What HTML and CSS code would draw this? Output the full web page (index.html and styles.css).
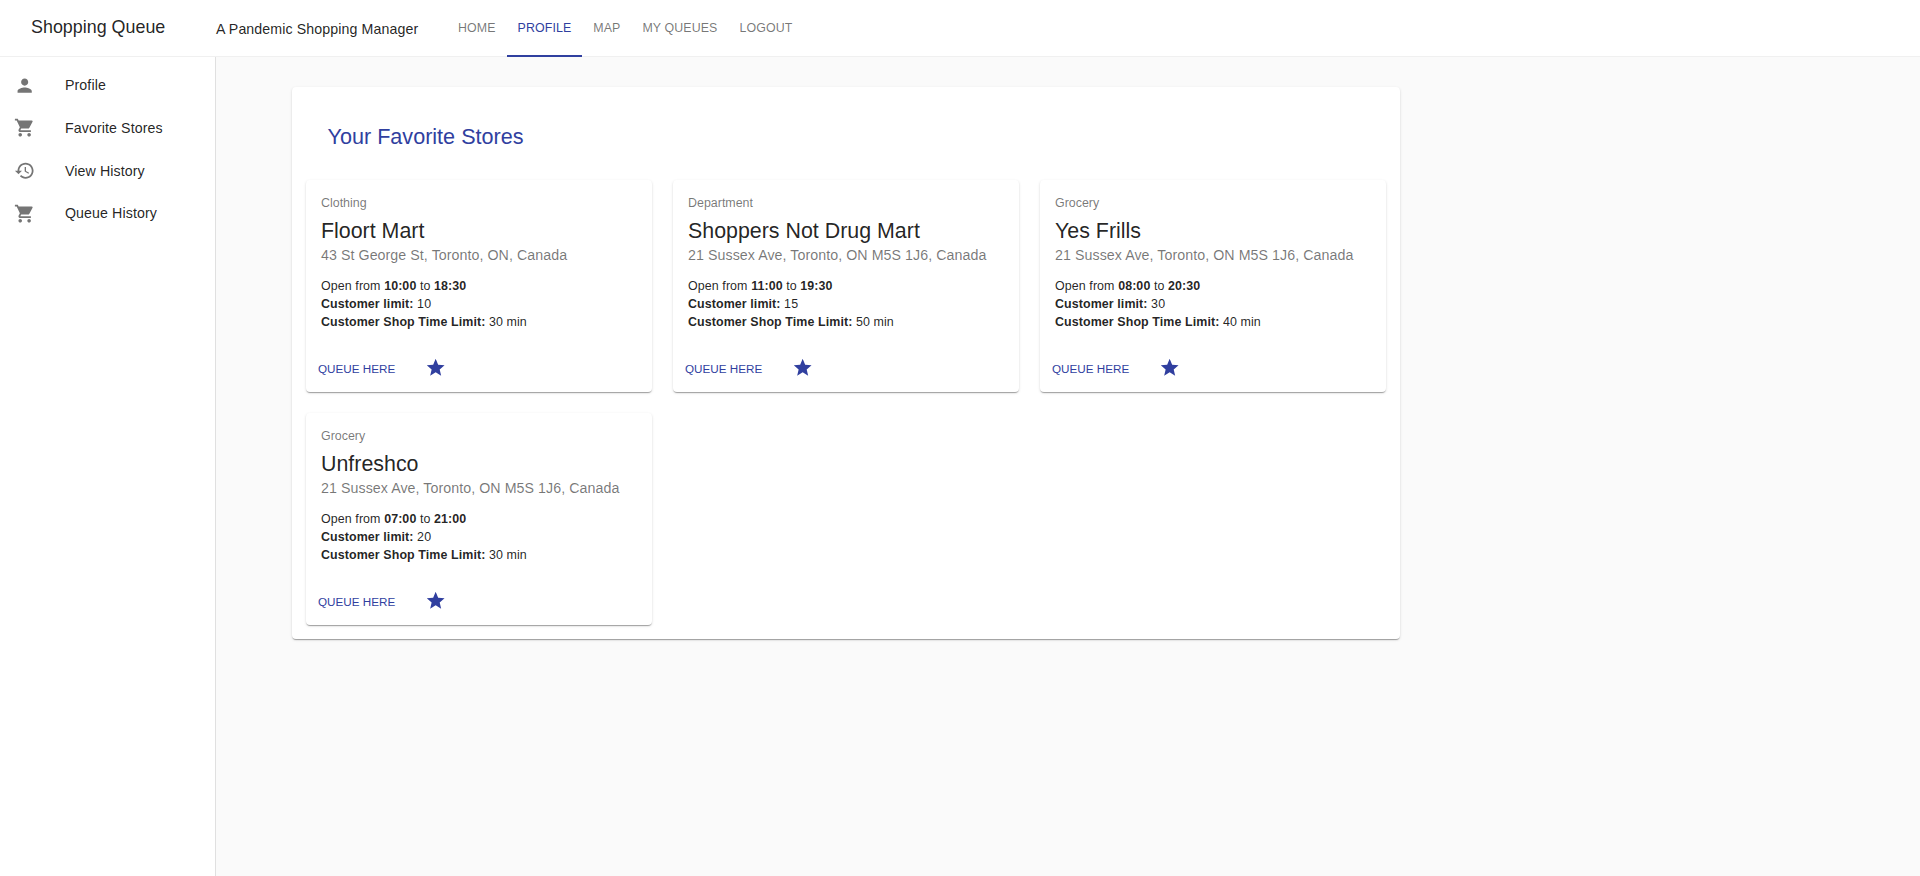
FILE: index.html
```html
<!DOCTYPE html>
<html lang="en">
<head>
    <meta charset="UTF-8">
    <meta name="viewport" content="width=device-width, initial-scale=1.0">
    <title>Shopping Queue</title>
    <link rel="stylesheet" href="styles.css">
</head>
<body>

    <svg class="icon-defs" width="0" height="0">
        <symbol id="icon-person" viewBox="0 0 24 24"><path d="M12 12c2.21 0 4-1.79 4-4s-1.79-4-4-4-4 1.79-4 4 1.79 4 4 4zm0 2c-2.67 0-8 1.34-8 4v2h16v-2c0-2.66-5.33-4-8-4z"/></symbol>
        <symbol id="icon-cart" viewBox="0 0 24 24"><path d="M7 18c-1.1 0-1.99.9-1.99 2S5.9 22 7 22s2-.9 2-2-.9-2-2-2zM1 2v2h2l3.6 7.59-1.35 2.45c-.16.28-.25.61-.25.96 0 1.1.9 2 2 2h12v-2H7.42c-.14 0-.25-.11-.25-.25l.03-.12.9-1.63h7.45c.75 0 1.41-.41 1.75-1.03l3.58-6.49c.08-.14.12-.31.12-.48 0-.55-.45-1-1-1H5.21l-.94-2H1zm16 16c-1.1 0-1.99.9-1.99 2s.89 2 1.99 2 2-.9 2-2-.9-2-2-2z"/></symbol>
        <symbol id="icon-history" viewBox="0 0 24 24"><path d="M13 3c-4.97 0-9 4.03-9 9H1l3.89 3.89.07.14L9 12H6c0-3.87 3.13-7 7-7s7 3.13 7 7-3.13 7-7 7c-1.93 0-3.68-.79-4.94-2.06l-1.42 1.42C8.27 19.99 10.51 21 13 21c4.97 0 9-4.03 9-9s-4.03-9-9-9zm-1 5v5l4.28 2.54.72-1.21-3.5-2.08V8H12z"/></symbol>
        <symbol id="icon-star" viewBox="0 0 24 24"><path d="M12 17.27L18.18 21l-1.64-7.03L22 9.24l-7.19-.61L12 2 9.19 8.63 2 9.24l5.46 4.73L5.82 21z"/></symbol>
    </svg>

    <header class="topbar">
        <div class="brand">Shopping Queue</div>
        <div class="tagline">A Pandemic Shopping Manager</div>
        <nav class="tabs">
            <a class="tab" href="#">HOME</a>
            <a class="tab active" href="#">PROFILE</a>
            <a class="tab" href="#">MAP</a>
            <a class="tab" href="#">MY QUEUES</a>
            <a class="tab" href="#">LOGOUT</a>
        </nav>
    </header>

    <div class="layout">
        <aside class="sidebar">
            <a class="side-item" href="#"><svg class="side-icon"><use href="#icon-person"/></svg><span>Profile</span></a>
            <a class="side-item" href="#"><svg class="side-icon"><use href="#icon-cart"/></svg><span>Favorite Stores</span></a>
            <a class="side-item" href="#"><svg class="side-icon"><use href="#icon-history"/></svg><span>View History</span></a>
            <a class="side-item" href="#"><svg class="side-icon"><use href="#icon-cart"/></svg><span>Queue History</span></a>
        </aside>

        <main class="content">
            <section class="panel">
                <h2 class="panel-title">Your Favorite Stores</h2>
                <div class="store-grid">

                    <article class="store-card">
                        <div class="store-type">Clothing</div>
                        <h3 class="store-name">Floort Mart</h3>
                        <div class="store-address">43 St George St, Toronto, ON, Canada</div>
                        <p class="store-info">Open from <strong>10:00</strong> to <strong>18:30</strong><br>
                            <strong>Customer limit:</strong> 10<br>
                            <strong>Customer Shop Time Limit:</strong> 30 min</p>
                        <div class="store-actions">
                            <a class="queue-btn" href="#">QUEUE HERE</a>
                            <svg class="star"><use href="#icon-star"/></svg>
                        </div>
                    </article>

                    <article class="store-card">
                        <div class="store-type">Department</div>
                        <h3 class="store-name">Shoppers Not Drug Mart</h3>
                        <div class="store-address">21 Sussex Ave, Toronto, ON M5S 1J6, Canada</div>
                        <p class="store-info">Open from <strong>11:00</strong> to <strong>19:30</strong><br>
                            <strong>Customer limit:</strong> 15<br>
                            <strong>Customer Shop Time Limit:</strong> 50 min</p>
                        <div class="store-actions">
                            <a class="queue-btn" href="#">QUEUE HERE</a>
                            <svg class="star"><use href="#icon-star"/></svg>
                        </div>
                    </article>

                    <article class="store-card">
                        <div class="store-type">Grocery</div>
                        <h3 class="store-name">Yes Frills</h3>
                        <div class="store-address">21 Sussex Ave, Toronto, ON M5S 1J6, Canada</div>
                        <p class="store-info">Open from <strong>08:00</strong> to <strong>20:30</strong><br>
                            <strong>Customer limit:</strong> 30<br>
                            <strong>Customer Shop Time Limit:</strong> 40 min</p>
                        <div class="store-actions">
                            <a class="queue-btn" href="#">QUEUE HERE</a>
                            <svg class="star"><use href="#icon-star"/></svg>
                        </div>
                    </article>

                    <article class="store-card">
                        <div class="store-type">Grocery</div>
                        <h3 class="store-name">Unfreshco</h3>
                        <div class="store-address">21 Sussex Ave, Toronto, ON M5S 1J6, Canada</div>
                        <p class="store-info">Open from <strong>07:00</strong> to <strong>21:00</strong><br>
                            <strong>Customer limit:</strong> 20<br>
                            <strong>Customer Shop Time Limit:</strong> 30 min</p>
                        <div class="store-actions">
                            <a class="queue-btn" href="#">QUEUE HERE</a>
                            <svg class="star"><use href="#icon-star"/></svg>
                        </div>
                    </article>

                </div>
            </section>
        </main>
    </div>

</body>
</html>
```

FILE: styles.css
```css
* {
    box-sizing: border-box;
}
html, body {
    height: 100%;
}
body {
    margin: 0;
    display: flex;
    flex-direction: column;
    font-family: "Liberation Sans", Arial, sans-serif;
    color: rgba(0, 0, 0, 0.87);
    background-color: #fafafa;
    overflow: hidden;
}
a {
    color: inherit;
    text-decoration: none;
}
.icon-defs {
    position: absolute;
}

/* top bar */
.topbar {
    display: flex;
    align-items: stretch;
    height: 57px;
    flex: none;
    background-color: #fff;
    border-bottom: 1px solid #f0f0f0;
}
.brand {
    width: 216px;
    padding: 19px 0 0 31px;
    font-size: 17.9px;
    line-height: 17px;
}
.tagline {
    width: 231px;
    padding: 21px 0 0 0;
    font-size: 14.2px;
    line-height: 16px;
    letter-spacing: 0.1px;
}
.tabs {
    display: flex;
    height: 57px;
}
.tab {
    padding: 21px 11px 0;
    font-size: 12.4px;
    line-height: 15px;
    letter-spacing: 0.1px;
    color: rgba(0, 0, 0, 0.54);
}
.tab.active {
    color: #303f9f;
    border-bottom: 2px solid #303f9f;
}

/* left menu */
.layout {
    display: flex;
    flex: 1;
    min-height: 0;
}
.sidebar {
    width: 216px;
    flex: none;
    padding-top: 7px;
    background-color: #fff;
    border-right: 1px solid #e0e0e0;
}
.side-item {
    display: flex;
    align-items: center;
    height: 42.67px;
    padding-left: 14px;
    font-size: 14.2px;
    letter-spacing: 0.1px;
}
.side-icon {
    width: 21.33px;
    height: 21.33px;
    margin-right: 29.67px;
    fill: #757575;
}

/* favourite stores */
.content {
    flex: 1;
    padding: 30px 0 0 76px;
}
.panel {
    width: 1108px;
    padding: 14px;
    background-color: #fff;
    border-radius: 4px;
    box-shadow: 0 2px 1px -1px rgba(0, 0, 0, 0.2), 0 1px 1px 0 rgba(0, 0, 0, 0.14), 0 1px 3px 0 rgba(0, 0, 0, 0.12);
}
.panel-title {
    margin: 0;
    padding: 24px 0 31px 21.5px;
    font-size: 21.6px;
    line-height: 24px;
    font-weight: 400;
    color: #303f9f;
}
.store-grid {
    display: grid;
    grid-template-columns: repeat(3, 346px);
    gap: 21px;
}
.store-card {
    height: 212px;
    padding: 14px 14.5px 0 15px;
    background-color: #fff;
    border-radius: 4px;
    box-shadow: 0 2px 1px -1px rgba(0, 0, 0, 0.2), 0 1px 1px 0 rgba(0, 0, 0, 0.14), 0 1px 3px 0 rgba(0, 0, 0, 0.12);
}
.store-type {
    font-size: 12.44px;
    line-height: 18px;
    color: rgba(0, 0, 0, 0.54);
}
.store-name {
    margin: 5px 0 0;
    font-size: 21.4px;
    line-height: 28px;
    font-weight: 400;
}
.store-address {
    margin-top: 1px;
    font-size: 14.22px;
    line-height: 18px;
    letter-spacing: 0.06px;
    color: rgba(0, 0, 0, 0.54);
}
.store-info {
    margin: 13px 0 0;
    font-size: 12.44px;
    line-height: 18px;
    letter-spacing: 0.09px;
}
.store-info strong {
    font-weight: 700;
}
.store-actions {
    display: flex;
    align-items: center;
    margin: 25px 0 0 -3px;
    height: 24px;
}
.queue-btn {
    width: 106.5px;
    font-size: 11.7px;
    color: #303f9f;
}
.star {
    width: 21.33px;
    height: 21.33px;
    fill: #303f9f;
}
```
